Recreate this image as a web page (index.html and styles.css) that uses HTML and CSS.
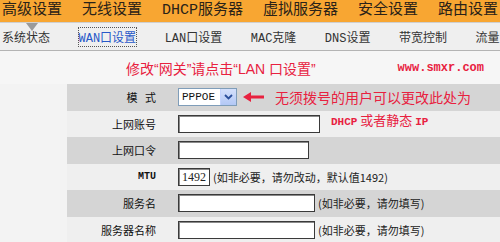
FILE: index.html
```html
<!DOCTYPE html>
<html>
<head>
    <title>WAN口设置</title>
    <link rel="stylesheet" href="styles.css">
</head>
<body>
<div class="topnav">
    <span>高级设置</span>
    <span>无线设置</span>
    <span>DHCP服务器</span>
    <span>虚拟服务器</span>
    <span>安全设置</span>
    <span>路由设置</span>
</div>

<div class="subnav">
    <i class="pointer"></i>
    <span>系统状态</span>
    <span class="current">WAN口设置</span>
    <span>LAN口设置</span>
    <span>MAC克隆</span>
    <span>DNS设置</span>
    <span>带宽控制</span>
    <span>流量</span>
</div>

<div class="notice">
    <span class="title">修改“网关”请点击“<span class="latin">LAN</span> 口设置”</span>
    <span class="site">www.smxr.com</span>
</div>

<div class="form">
    <div class="row dark">
        <div class="label">模&nbsp;&nbsp;&nbsp;式</div>
        <div class="select">
            <span class="value">PPPOE</span>
            <span class="btn">
                <svg width="9" height="6" viewBox="0 0 9 6"><path d="M1 1 L4.5 4.5 L8 1" fill="none" stroke="#2a4e9a" stroke-width="1.8"/></svg>
            </span>
        </div>
        <svg class="arrow" width="21" height="10" viewBox="0 0 21 10">
            <path d="M0 5 L8 0 L8 3.5 L21 3.5 L21 6.5 L8 6.5 L8 10 Z" fill="#e8213f"/>
        </svg>
        <span class="note">无须拨号的用户可以更改此处为</span>
    </div>
    <div class="row">
        <div class="label">上网账号</div>
        <div class="field" style="width: 142px"></div>
        <span class="note2"><span class="mono">DHCP</span> 或者静态 <span class="mono">IP</span></span>
    </div>
    <div class="row dark">
        <div class="label">上网口令</div>
        <div class="field" style="width: 131px"></div>
    </div>
    <div class="row">
        <div class="label mtu">MTU</div>
        <div class="field small">1492</div>
        <span class="hint">(如非必要，请勿改动，默认值1492)</span>
    </div>
    <div class="row dark">
        <div class="label">服务名</div>
        <div class="field" style="width: 137px"></div>
        <span class="hint">(如非必要，请勿填写)</span>
    </div>
    <div class="row">
        <div class="label">服务器名称</div>
        <div class="field" style="width: 137px"></div>
        <span class="hint">(如非必要，请勿填写)</span>
    </div>
</div>
</body>
</html>
```

FILE: styles.css
```css
body {
    margin: 0;
    background-color: #f3f3f3;
    font-family: "Liberation Mono", "Noto Sans CJK SC", monospace;
    color: #222;
    overflow: hidden;
}

.topnav {
    display: flex;
    gap: 20px;
    height: 22px;
    padding-left: 2px;
    background-color: #f8a632;
    font-size: 15px;
    line-height: 22px;
    color: #2a2218;
    white-space: nowrap;
}

.subnav {
    position: relative;
    display: flex;
    align-items: center;
    gap: 28.5px;
    height: 26px;
    padding-left: 2px;
    padding-top: 1px;
    background-color: #efefef;
    border-top: 1px solid #cfcfcf;
    border-bottom: 1px solid #b4b4b4;
    font-size: 12px;
    color: #333;
    white-space: nowrap;
}

.subnav .current {
    color: #2858c8;
    outline: 1px dotted #555;
    outline-offset: 0;
}

.pointer {
    position: absolute;
    left: 26px;
    top: 0;
    width: 0;
    height: 0;
    border-left: 6px solid transparent;
    border-right: 6px solid transparent;
    border-top: 8px solid #9a9a9a;
}

.notice {
    display: flex;
    align-items: center;
    height: 33px;
    padding-left: 126px;
    padding-right: 16px;
    background-color: #f6f6f6;
    white-space: nowrap;
}

.notice .title {
    font-family: "Liberation Sans", "Noto Sans CJK SC", sans-serif;
    font-size: 14px;
    color: #e8213f;
}

.notice .site {
    margin-left: auto;
    font-size: 12px;
    font-weight: bold;
    color: #e8213f;
}

.form {
    margin-left: 67px;
}

.row {
    display: flex;
    align-items: center;
    height: 26.5px;
    background-color: #efefef;
    white-space: nowrap;
}

.row.dark {
    background-color: #d5d5d5;
}

.label {
    box-sizing: border-box;
    width: 111px;
    padding-right: 22px;
    text-align: right;
    font-family: "Noto Sans CJK SC", sans-serif;
    font-size: 11px;
    color: #111;
}

.label.mtu {
    font-family: "Liberation Mono", monospace;
    font-weight: bold;
    font-size: 10px;
}

.select {
    box-sizing: border-box;
    display: flex;
    align-items: center;
    width: 59px;
    height: 18px;
    border: 1px solid #7f9db9;
    background-color: #fff;
}

.select .value {
    flex: 1;
    padding-left: 3px;
    font-size: 11px;
    color: #111;
}

.select .btn {
    display: flex;
    align-items: center;
    justify-content: center;
    width: 15px;
    height: 16px;
    background: linear-gradient(#d4e0fb, #b3c8f5);
    border-left: 1px solid #c3d3fd;
}

.arrow {
    margin-left: 6px;
}

.note {
    margin-left: 11px;
    font-family: "Noto Sans CJK SC", sans-serif;
    font-size: 14px;
    color: #e8213f;
}

.field {
    box-sizing: border-box;
    height: 18px;
    border: 1px solid #3a3a3a;
    box-shadow: inset 1px 1px 0 #8a8a8a;
    background-color: #fff;
}

.field.small {
    width: 32px;
    padding-left: 3px;
    font-family: "Liberation Serif", serif;
    font-size: 12px;
    line-height: 16px;
}

.note2 {
    align-self: flex-start;
    margin-top: -1px;
    margin-left: 11px;
    font-family: "Noto Sans CJK SC", sans-serif;
    font-size: 13px;
    color: #e8213f;
}

.note2 .mono {
    font-family: "Liberation Mono", monospace;
    font-size: 11px;
    font-weight: bold;
}

.hint {
    margin-left: 3px;
    font-family: "Noto Sans CJK SC", sans-serif;
    font-size: 11px;
    color: #222;
}
```
